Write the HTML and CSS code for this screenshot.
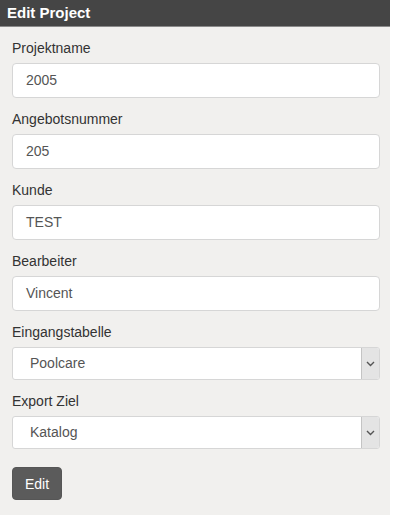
FILE: index.html
```html
<!DOCTYPE html>
<html>
<head>
<meta charset="utf-8">
<link rel="stylesheet" href="styles.css">
</head>
<body>
<div class="panel">
  <div class="panel-header">Edit Project</div>
  <form class="form">
    <div class="field">
      <label class="label">Projektname</label>
      <div class="input">2005</div>
    </div>
    <div class="field">
      <label class="label">Angebotsnummer</label>
      <div class="input">205</div>
    </div>
    <div class="field">
      <label class="label">Kunde</label>
      <div class="input">TEST</div>
    </div>
    <div class="field">
      <label class="label">Bearbeiter</label>
      <div class="input">Vincent</div>
    </div>
    <div class="field">
      <label class="label">Eingangstabelle</label>
      <div class="select"><span class="select-text">Poolcare</span><span class="select-btn"><svg width="9" height="6" viewBox="0 0 9 6"><path d="M1 1 L4.5 4.5 L8 1" fill="none" stroke="#555" stroke-width="1.4"/></svg></span></div>
    </div>
    <div class="field">
      <label class="label">Export Ziel</label>
      <div class="select"><span class="select-text">Katalog</span><span class="select-btn"><svg width="9" height="6" viewBox="0 0 9 6"><path d="M1 1 L4.5 4.5 L8 1" fill="none" stroke="#555" stroke-width="1.4"/></svg></span></div>
    </div>
    <div class="actions">
      <button type="button" class="btn">Edit</button>
    </div>
  </form>
</div>
</body>
</html>
```
FILE: styles.css
```css
html, body {
  margin: 0;
  padding: 0;
  background: #ffffff;
  font-family: "Liberation Sans", Arial, sans-serif;
}
.panel {
  width: 390px;
  background: #f1f0ee;
  padding-bottom: 15px;
}
.panel-header {
  height: 26px;
  line-height: 26px;
  background: #454545;
  border-bottom: 1px solid #8a8a8a;
  color: #ffffff;
  font-weight: bold;
  font-size: 15px;
  padding-left: 7px;
}
.form {
  padding: 11px 10px 0 12px;
  display: flex;
  flex-direction: column;
}
.field {
  display: flex;
  flex-direction: column;
  gap: 5px;
  margin-bottom: 11px;
}
.label {
  font-size: 14px;
  line-height: 20px;
  color: #333333;
}
.input {
  box-sizing: border-box;
  height: 35px;
  background: #ffffff;
  border: 1px solid #d6d6d6;
  border-radius: 4px;
  padding: 0 13px;
  font-size: 14px;
  line-height: 33px;
  color: #555555;
}
.select {
  box-sizing: border-box;
  height: 33px;
  background: #ffffff;
  border: 1px solid #d6d6d6;
  border-radius: 3px;
  display: flex;
  align-items: stretch;
}
.select-text {
  flex: 1;
  padding-left: 17px;
  font-size: 14px;
  line-height: 31px;
  color: #555555;
}
.select-btn {
  width: 17px;
  background: #e4e4e4;
  border-left: 1px solid #c4c4c4;
  display: flex;
  align-items: center;
  justify-content: center;
  border-radius: 0 2px 2px 0;
}
.actions {
  padding-top: 7px;
}
.btn {
  width: 50px;
  height: 33px;
  background: #5b5b5b;
  color: #ffffff;
  border: 1px solid #565656;
  border-radius: 4px;
  font-family: "Liberation Sans", Arial, sans-serif;
  font-size: 14px;
  padding: 0;
}
```
